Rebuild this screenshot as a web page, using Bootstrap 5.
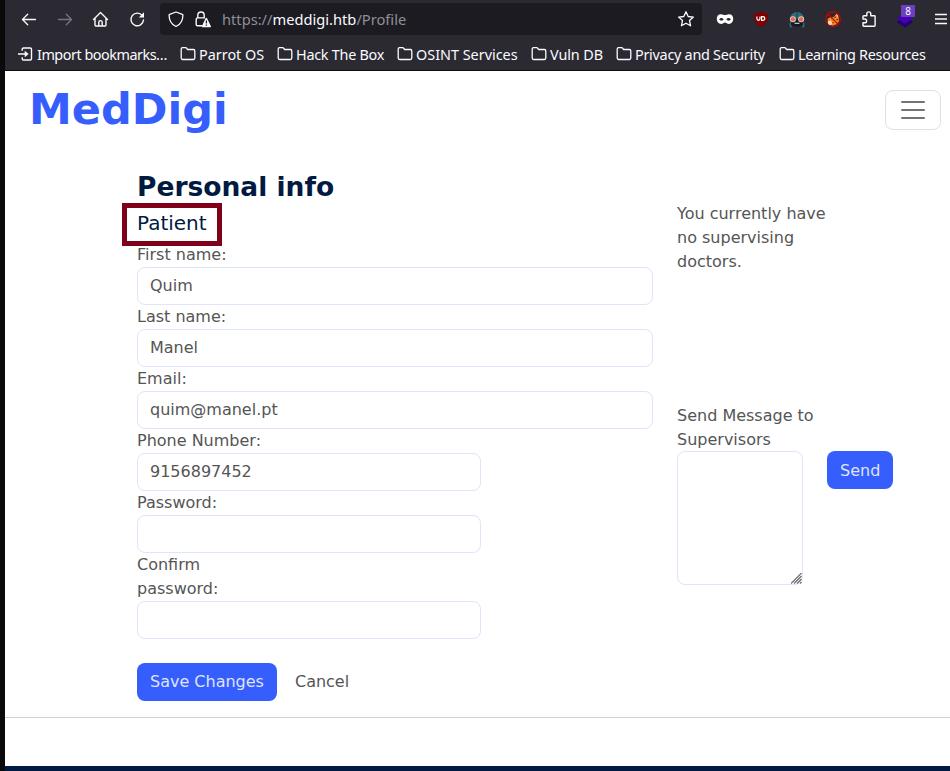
<!DOCTYPE html>
<html lang="en">
<head>
<meta charset="utf-8">
<meta name="viewport" content="width=device-width, initial-scale=1">
<title>MedDigi - Profile</title>
<link href="https://cdn.jsdelivr.net/npm/bootstrap@5.3.0/dist/css/bootstrap.min.css" rel="stylesheet">
<style>
html, body { height: 771px; overflow: hidden; }
body { font-family: "DejaVu Sans", sans-serif; color: #555; background: #0a0a0a; padding-left: 5px; }
svg { display: block; flex: none; }
.browser { height: 71px; background: #2b2a33; border-bottom: 1px solid #0c0c0d; color: #fbfbfe; font-family: "Noto Sans", sans-serif; }
.toolbar { height: 38px; padding: 3px 0 3px 15px; }
.toolbar .nav-icons { gap: 18px; margin-right: 14px; }
.urlbar { width: 542px; height: 32px; border-radius: 4px; background: #1c1b22; padding: 0 7px; font-size: 14.67px; color: #8f8f98; line-height: 32px; }
.urlbar b { font-weight: 400; color: #fbfbfe; }
.urlbar .address { margin-left: 9px; }
.extensions { margin-left: 14px; gap: 18px; }
.ext-count { left: 5px; top: -5px; width: 14px; height: 12px; background: #6b3fc0; border-radius: 1px; font-size: 10px; line-height: 12px; }
.bookmarks { height: 32px; padding-left: 13px; font-size: 14.4px; line-height: 32px; }
.bookmarks span { display: flex; align-items: center; gap: 3px; white-space: nowrap; margin-left: -1px; padding-top: 2px; }
.bookmarks svg { margin-top: -2px; }
.bookmarks .w-import { width: 163px; letter-spacing: -.48px; margin-left: 0; }
.bookmarks .w-parrot { width: 98px; }
.bookmarks .w-hack { width: 121px; letter-spacing: -.26px; }
.bookmarks .w-osint { width: 135px; }
.bookmarks .w-vuln { width: 86px; letter-spacing: -.1px; }
.bookmarks .w-privacy { width: 164px; letter-spacing: -.27px; }
.bookmarks .w-learning { letter-spacing: -.3px; }
.page { height: 695px; background: #fff; }
.site-nav { height: 78px; padding: 0 9px 0 24px; }
.brand { font-size: 43px; font-weight: 700; color: #355efc; line-height: 1; padding-bottom: 2px; }
.navbar-toggler { border-radius: 8px; border-color: #e2e2e2; }
.profile { width: 720px; margin-left: 120px; padding-top: 20px; }
.profile > div { padding: 0 12px; }
.heading { font-size: 26.5px; line-height: 34px; height: 34px; padding-top: 1px; margin-bottom: 8px; font-weight: 700; color: #011a41; }
.role { font-size: 20px; line-height: 24px; margin-bottom: 8px; color: #011a41; }
.role-frame { left: -15px; top: -8px; width: 100px; height: 43px; border: 5px solid #800019; }
.form-label { display: block; line-height: 24px; margin: 0; max-width: 110px; white-space: nowrap; }
.form-label.wrapping { white-space: normal; }
.form-control { border-color: #dfe4fd; border-radius: 8px; color: #555; height: 38px; padding-top: 5px; padding-bottom: 7px; }
.form-control.short { width: 344px; }
.btn-brand { background: #355efc; color: #dfe4fd; border-radius: 8px; height: 38px; }
.btn-send { padding-top: 7px; padding-bottom: 5px; }
.btn-plain { color: #555; margin-left: 5px; }
.side-note { height: 203px; padding-top: 33px; }
.message-label { height: 79px; padding-top: 32px; }
textarea.form-control { width: 126px; height: 134px; resize: none; }
.grip { right: 1px; bottom: 1px; }
.rule { height: 1px; background: #d0d0d0; margin-top: 16px; }
.footer-bar { height: 5px; background: #011a41; }
</style>
<script src="https://cdn.jsdelivr.net/npm/bootstrap@5.3.0/dist/js/bootstrap.bundle.min.js"></script>
</head>
<body>
<svg width="0" height="0" class="position-absolute">
  <symbol id="folder" viewBox="0 0 16 16"><path d="M2.600 1.700h3c.5 0 .9.200 1.200.6l.8 1.200h5.800c.8 0 1.400.6 1.400 1.400v7.200c0 .8-.6 1.400-1.400 1.400H2.600c-.8 0-1.400-.6-1.400-1.400v-9c0-.8.6-1.400 1.400-1.400z" fill="none" stroke="#fbfbfe" stroke-width="1.300"/></symbol>
</svg>
<header class="browser">
  <div class="toolbar d-flex align-items-center">
    <div class="nav-icons d-flex align-items-center">
      <svg width="18" height="18" viewBox="0 0 18 18" fill="none" stroke="#fbfbfe" stroke-width="1.3" stroke-linecap="round" stroke-linejoin="round"><path d="M15.5 9.5h-13M7.700 4.200L2.500 9.500l5.200 5.200"/></svg>
      <svg width="18" height="18" viewBox="0 0 18 18" fill="none" stroke="#76757d" stroke-width="1.3" stroke-linecap="round" stroke-linejoin="round"><path d="M2.500 9.500h13M10.300 4.200l5.200 5.300-5.200 5.200"/></svg>
      <svg width="18" height="18" viewBox="0 0 18 18" fill="none" stroke="#fbfbfe" stroke-width="1.4" stroke-linecap="round" stroke-linejoin="round"><path d="M1.500 9.500L8.500 2.500l7 7M3 8.500v6.600c0 .5.400.900.900.900h9.200c.5 0 .9-.4.900-.9V8.500M6.800 15.500v-3.200c0-2.200 3.400-2.200 3.400 0v3.200"/></svg>
      <svg width="18" height="18" viewBox="0 0 18 18" fill="none" stroke="#fbfbfe" stroke-width="1.400" stroke-linecap="round"><path d="M14.300 5.700A6.300 6.300 0 1 0 15.500 10"/><path d="M16 2.300V7.500h-5.200z" fill="#fbfbfe" stroke="none"/></svg>
    </div>
    <div class="urlbar d-flex align-items-center">
      <svg width="18" height="18" viewBox="0 0 18 18" fill="none" stroke="#fbfbfe" stroke-width="1.3" stroke-linejoin="round"><path d="M9 2l6.400 2.300c.3.100.5.400.5.700C15.900 10.500 13.500 14.500 9 16.500 4.500 14.500 2.100 10.500 2.100 5c0-.3.200-.6.500-.7z"/></svg>
      <svg class="ms-2" width="20" height="18" viewBox="0 0 20 18" fill="none" stroke="#fbfbfe" stroke-width="1.400"><path d="M9 15.800H4.600c-.8 0-1.400-.6-1.400-1.400V9.300c0-.8.600-1.400 1.400-1.400h7.300M4.800 7.800V5.200a3.200 3.200 0 0 1 6.400 0v3"/><path d="M13.300 8.500L9.600 16.500h7.600z" fill="#fbfbfe" stroke="#fbfbfe" stroke-width="1.600" stroke-linejoin="round"/><path d="M13.400 10.500v3M13.400 14.500v1.300" stroke="#1c1b22" stroke-width="1.300"/></svg>
      <span class="address flex-grow-1">https://<b>meddigi.htb</b>/Profile</span>
      <svg width="18" height="18" viewBox="0 0 18 18" fill="none" stroke="#fbfbfe" stroke-width="1.3" stroke-linejoin="round"><path d="M9 1.700l2.200 4.800 5.200.6-3.900 3.500 1.100 5.200L9 13.200l-4.600 2.600 1.100-5.200L1.600 7.100l5.200-.6z"/></svg>
    </div>
    <div class="extensions d-flex align-items-center">
      <svg width="18" height="18" viewBox="0 0 18 18"><path d="M5 4.300c1.800 0 2.600.8 4 .8s2.200-.8 4-.8c2.800 0 4.200 2 4.200 4.500 0 3-1.900 5.200-4.300 5.200-2 0-2.600-1.500-3.900-1.500S7.100 14 5.100 14C2.700 14 .8 11.800.8 8.800.8 6.300 2.200 4.300 5 4.300z" fill="#fff"/><ellipse cx="5.400" cy="9.300" rx="1.900" ry="1.400" fill="#2b2a33"/><ellipse cx="12.600" cy="9.300" rx="1.900" ry="1.400" fill="#2b2a33"/></svg>
      <svg width="18" height="18" viewBox="0 0 18 18"><path d="M9 1.500c2 1.400 4 1.900 7 1.900 0 7-1.400 10.800-7 13.600C3.400 14.200 2 10.400 2 3.400c3 0 5-.5 7-1.900z" fill="#800000"/><path d="M4.900 6.600v2c0 2.300 3.100 2.300 3.100 0v-2M9.600 6.600h1.200c2.600 0 2.600 3.700 0 3.700H9.600z" fill="none" stroke="#fff" stroke-width="1.200"/></svg>
      <svg width="18" height="18" viewBox="0 0 18 18"><path d="M2.300 8.500C2.300-.3 15.700-.3 15.700 8.500z" fill="#2f6c7f"/><path d="M9 2.300v5" stroke="#183d49"/><path d="M3 10h12l-.5 6.500h-11z" fill="#141b20"/><circle cx="4.900" cy="9.300" r="3" fill="#dedad8"/><circle cx="13.100" cy="9.300" r="3" fill="#dedad8"/><circle cx="4.900" cy="9.300" r="2.200" fill="#ed6a4c"/><circle cx="13.100" cy="9.300" r="2.200" fill="#ed6a4c"/><path d="M6.500 13.300h5" stroke="#c8d0d3" stroke-width="1.200"/><path d="M2.300 12.500v4h2M15.700 12.500v4h-2" fill="none" stroke="#2f6c7f" stroke-width="1.400"/></svg>
      <svg width="18" height="18" viewBox="0 0 18 18"><path d="M3.500 9l3-2 2.800.3 3.200-3.500 2 2.500.5 5-2.500 3-4 1.500-4-1.500z" fill="#f08a24"/><path d="M3.500 11.500l3-1 2.200 2.500-1.800 2H4.700zM12.500 4l1.700 1.800-.8 1.700z" fill="#f8dcc0"/><path d="M10.400 7.300l1.300-.3M12.600 9.900l1.200-.6M8.500 12.500l1 .6" stroke="#442015" stroke-width="1.200"/><circle cx="9" cy="9.200" r="7.300" fill="none" stroke="#c80000" stroke-width="1.200"/><path d="M3.800 4l10.400 10.400" stroke="#c80000" stroke-width="1.200"/></svg>
      <svg width="18" height="18" viewBox="0 0 18 18" fill="none" stroke="#fbfbfe" stroke-width="1.400" stroke-linejoin="round"><path d="M3 9V6.500c0-.5.300-.8.800-.8h3V3.900a2 2 0 0 1 4 0v1.800h3.600c.4 0 .7.300.7.700v9.200c0 .4-.3.700-.7.700H3.700a.7.700 0 0 1-.7-.7v-2.800h1.700a1.900 1.900 0 0 0 0-3.800z"/></svg>
      <div class="position-relative">
        <svg width="18" height="18" viewBox="0 0 18 18"><path d="M.7 12L9 6.500l8 5.500L9 17.500z" fill="#240070"/><path d="M.7 8L9 2.500 17 8 9 14z" fill="#4400b2"/></svg>
        <div class="ext-count position-absolute text-center">8</div>
      </div>
      <svg width="18" height="18" viewBox="0 0 18 18" stroke="#fbfbfe" stroke-width="1.400"><path d="M3 4.500h12M3 9h12M3 13.500h12"/></svg>
    </div>
  </div>
  <div class="bookmarks d-flex align-items-center">
    <span class="w-import"><svg width="16" height="16" viewBox="0 0 16 16" fill="none" stroke="#fbfbfe" stroke-width="1.400"><path d="M4.200 4.700V3.300c0-.8.500-1.300 1.300-1.300h6.700c.8 0 1.300.5 1.300 1.300v9.400c0 .8-.5 1.300-1.300 1.300H5.500c-.8 0-1.300-.5-1.300-1.300v-1.400M0 8h8"/><path d="M6.700 4.700L10.700 8l-4 3.300z" fill="#fbfbfe" stroke="none"/></svg>Import bookmarks…</span>
    <span class="w-parrot"><svg width="16" height="16"><use href="#folder"/></svg>Parrot OS</span>
    <span class="w-hack"><svg width="16" height="16"><use href="#folder"/></svg>Hack The Box</span>
    <span class="w-osint"><svg width="16" height="16"><use href="#folder"/></svg>OSINT Services</span>
    <span class="w-vuln"><svg width="16" height="16"><use href="#folder"/></svg>Vuln DB</span>
    <span class="w-privacy"><svg width="16" height="16"><use href="#folder"/></svg>Privacy and Security</span>
    <span class="w-learning"><svg width="16" height="16"><use href="#folder"/></svg>Learning Resources</span>
  </div>
</header>
<div class="page">
  <nav class="site-nav d-flex align-items-center justify-content-between">
    <div class="brand">MedDigi</div>
    <button class="navbar-toggler border px-2 py-1 d-flex align-items-center justify-content-center" type="button" aria-label="Menu"><svg width="38" height="30" viewBox="0 0 38 30" stroke="#737373" stroke-width="2" stroke-linecap="round"><path d="M8 7h22M8 15h22M8 23h22"/></svg></button>
  </nav>
  <main class="profile row g-0">
    <div class="col-9">
      <h3 class="heading">Personal info</h3>
      <div class="role position-relative">Patient<div class="role-frame position-absolute"></div></div>
      <label class="form-label">First name:</label>
      <input class="form-control" value="Quim">
      <label class="form-label">Last name:</label>
      <input class="form-control" value="Manel">
      <label class="form-label">Email:</label>
      <input class="form-control" value="quim@manel.pt">
      <label class="form-label">Phone Number:</label>
      <input class="form-control short" value="9156897452">
      <label class="form-label">Password:</label>
      <input class="form-control short" type="password">
      <label class="form-label wrapping">Confirm password:</label>
      <input class="form-control short" type="password">
      <div class="d-flex mt-4">
        <button class="btn btn-brand">Save Changes</button>
        <button class="btn btn-plain">Cancel</button>
      </div>
    </div>
    <div class="col-3">
      <div class="side-note">You currently have no supervising doctors.</div>
      <div class="message-label">Send Message to Supervisors</div>
      <div class="d-flex gap-4">
        <div class="position-relative"><textarea class="form-control"></textarea>
          <svg class="grip position-absolute" width="11" height="11" viewBox="0 0 11 11" stroke="#666" stroke-width="1.100"><path d="M0 10.500L10.500 0M3 10.500L10.500 3M6 10.500L10.500 6M9 10.500l1.500-1.500"/></svg>
        </div>
        <button class="btn btn-brand btn-send">Send</button>
      </div>
    </div>
  </main>
  <div class="rule"></div>
</div>
<footer class="footer-bar"></footer>
</body>
</html>
